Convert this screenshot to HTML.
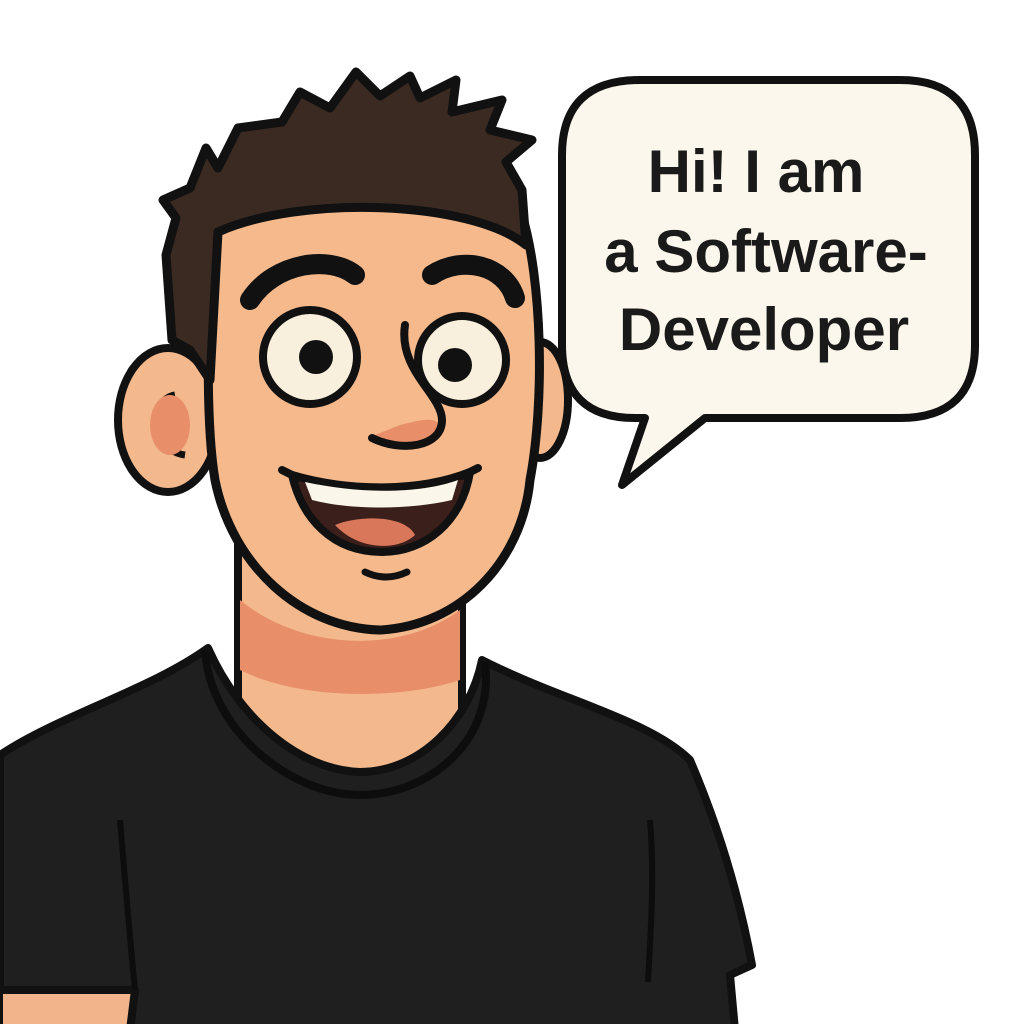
<!DOCTYPE html>
<html><head><meta charset="utf-8"><style>
html,body{margin:0;padding:0;background:#fff;width:1024px;height:1024px;overflow:hidden}
svg{display:block}
</style></head><body>
<svg width="1024" height="1024" viewBox="0 0 1024 1024" xmlns="http://www.w3.org/2000/svg">
<rect width="1024" height="1024" fill="#fff"/>
<!-- speech bubble -->
<path d="M640,80 L900,80 Q975,80 975,155 L975,345 Q975,418 900,418 L705,418 L622,485 L645,418 L635,418 Q562,418 562,345 L562,155 Q562,80 640,80 Z" fill="#fbf7ec" stroke="#111" stroke-width="8" stroke-linejoin="round"/>
<g font-family="'Liberation Sans',sans-serif" font-weight="bold" fill="#1a1a1a" text-anchor="middle" font-size="60">
<text x="756" y="192">Hi! I am</text>
<text x="766" y="272">a Software-</text>
<text x="764" y="350">Developer</text>
</g>
<!-- arms skin -->
<rect x="0" y="990" width="135" height="40" fill="#f2b48a" stroke="#111" stroke-width="6"/>
<rect x="648" y="982" width="82" height="50" fill="#f2b48a" stroke="#111" stroke-width="6"/>
<!-- neck -->
<path d="M238,540 L462,540 L462,800 L238,800 Z" fill="#f3b88c" stroke="#111" stroke-width="8"/>
<path d="M240,600 C300,650 400,655 460,610 L460,680 C400,700 300,700 240,670 Z" fill="#e88e68"/>
<!-- shirt -->
<path d="M0,755 C60,715 150,690 208,648 C240,720 300,770 360,772 C420,772 470,720 482,660 C560,700 650,720 690,760 C720,830 740,900 752,965 L730,975 L735,1030 L130,1030 L135,990 L0,990 Z" fill="#1f1f1f" stroke="#111" stroke-width="8" stroke-linejoin="round"/>
<path d="M205,650 C210,730 290,795 360,795 C430,795 495,740 485,662" fill="none" stroke="#0d0d0d" stroke-width="8"/>
<path d="M120,820 C125,880 130,940 135,990" fill="none" stroke="#0d0d0d" stroke-width="6"/>
<path d="M650,820 C655,880 650,940 648,982" fill="none" stroke="#0d0d0d" stroke-width="6"/>
<!-- ears -->
<ellipse cx="168" cy="420" rx="50" ry="72" fill="#f3b88c" stroke="#111" stroke-width="8"/>
<path d="M185,455 C150,450 148,400 175,395" fill="none" stroke="#111" stroke-width="7"/>
<ellipse cx="170" cy="425" rx="20" ry="30" fill="#e88e68"/>
<ellipse cx="540" cy="400" rx="28" ry="58" fill="#f3b88c" stroke="#111" stroke-width="8"/>
<!-- face -->
<path d="M212,225 C208,320 205,420 215,480 C232,565 300,628 380,630 C460,626 522,562 530,480 C545,400 542,280 522,215 C460,190 300,190 212,225 Z" fill="#f5b98c" stroke="#111" stroke-width="9"/>
<!-- hair -->
<path d="M172,340 L166,255 L176,218 L163,200 L190,188 L206,148 L218,168 L238,128 L282,122 L300,92 L330,108 L356,72 L380,96 L410,76 L420,98 L456,80 L452,112 L502,100 L490,130 L532,140 L506,162 L522,190 L526,245 C470,200 300,195 218,232 L210,380 L190,350 Z" fill="#3a2a22" stroke="#111" stroke-width="9" stroke-linejoin="round"/>
<!-- eyebrows -->
<path d="M250,300 C275,262 330,255 355,275" fill="none" stroke="#111" stroke-width="20" stroke-linecap="round"/>
<path d="M432,275 C462,255 505,265 515,298" fill="none" stroke="#111" stroke-width="20" stroke-linecap="round"/>
<!-- eyes -->
<circle cx="310" cy="357" r="47" fill="#f8efdc" stroke="#111" stroke-width="8"/>
<circle cx="316" cy="357" r="17" fill="#111"/>
<circle cx="462" cy="360" r="44" fill="#f8efdc" stroke="#111" stroke-width="8"/>
<circle cx="455" cy="365" r="17" fill="#111"/>
<!-- nose -->
<path d="M375,435 C395,450 430,450 440,428 C438,415 420,420 400,425 Z" fill="#e88e68"/>
<path d="M405,325 C398,370 442,395 442,420 C442,448 400,452 372,438" fill="none" stroke="#111" stroke-width="8" stroke-linecap="round"/>
<!-- mouth -->
<path d="M292,475 C350,492 420,492 470,472 C462,522 425,552 382,552 C332,552 302,518 292,475 Z" fill="#3a1f1a" stroke="#111" stroke-width="8" stroke-linejoin="round"/>
<path d="M305,482 C360,494 420,494 458,480 L452,500 C410,510 350,510 312,500 Z" fill="#fbf6ea"/>
<path d="M335,525 C360,515 405,515 415,535 C400,550 360,552 335,525 Z" fill="#d9775a"/>
<path d="M282,470 L298,478 M462,476 L478,468" stroke="#111" stroke-width="8" stroke-linecap="round"/>
<path d="M365,572 Q386,582 407,572" fill="none" stroke="#111" stroke-width="7" stroke-linecap="round"/>
</svg>
</body></html>
